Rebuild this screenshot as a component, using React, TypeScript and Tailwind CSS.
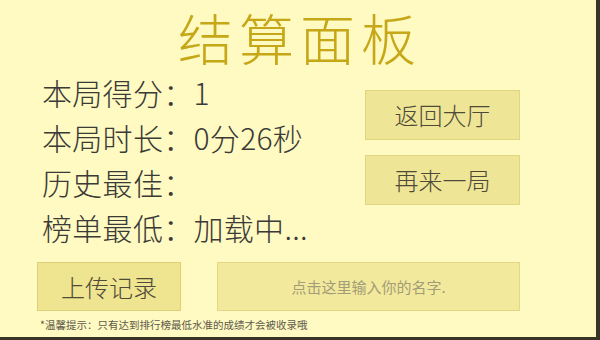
import React, { useState } from "react";

const FONT = { fontFamily: '"Noto Sans CJK SC", "Noto Sans", sans-serif' };

const stats = [
  { label: "本局得分：", value: "1" },
  { label: "本局时长：", value: "0分26秒" },
  { label: "历史最佳：", value: "" },
  { label: "榜单最低：", value: "加载中..." },
];

const SideButton = ({ text }: { text: string }) => (
  <button className="w-[155px] h-[50px] bg-[#efe596] border border-[#e1d57f] text-[24px] text-[#4d4a3a] font-light leading-none">
    {text}
  </button>
);

export default function App() {
  const [name, setName] = useState("");

  return (
    <div
      className="w-[600px] h-[340px] bg-[#fff9c2] border-r-4 border-b-[3px] border-[#3a3426] overflow-hidden flex flex-col"
      style={FONT}
    >
      <h1 className="h-[70px] text-center text-[55px] leading-[70px] tracking-[6px] text-[#c6a717] font-light pl-[4px] pt-[1px]">
        结算面板
      </h1>

      <div className="h-[180px] flex">
        <div className="pl-[42px] flex flex-col">
          {stats.map((s) => (
            <div
              key={s.label}
              className="h-[45px] leading-[45px] text-[30px] tracking-[0.3px] text-[#3a3a36] font-light whitespace-nowrap"
            >
              {s.label}
              {s.value}
            </div>
          ))}
        </div>
        <div className="ml-auto mr-[76px] pt-[20px] flex flex-col gap-[15px]">
          <SideButton text="返回大厅" />
          <SideButton text="再来一局" />
        </div>
      </div>

      <div className="mt-[12px] pl-[37px] flex gap-[36px]">
        <button className="w-[144px] h-[49px] bg-[#efe48f] border border-[#ddd07a] text-[24px] text-[#4d4a3a] font-light leading-none">
          上传记录
        </button>
        <input
          value={name}
          onChange={(e) => setName(e.target.value)}
          placeholder="点击这里输入你的名字."
          className="w-[303px] h-[49px] bg-[#f3e99c] border border-[#e3d784] text-center text-[15px] text-[#6a6650] placeholder:text-[#a29c78] outline-none"
        />
      </div>

      <p className="mt-[7px] pl-[40px] text-[10.5px] leading-[14px] text-[#5e5b4c]">
        *温馨提示：只有达到排行榜最低水准的成绩才会被收录哦
      </p>
    </div>
  );
}
